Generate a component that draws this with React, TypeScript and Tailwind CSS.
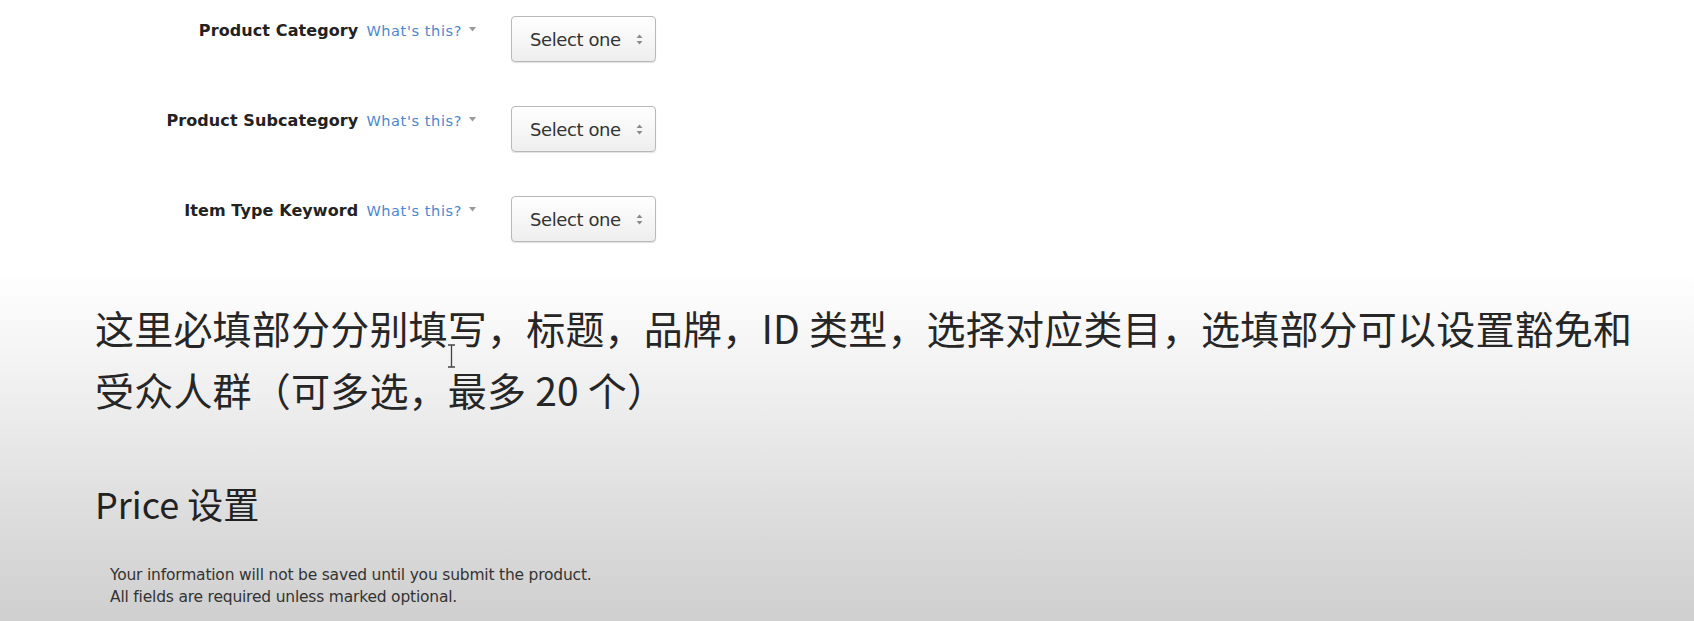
import React from 'react';

const fields = ['Product Category', 'Product Subcategory', 'Item Type Keyword'];

function UpDownArrows() {
  return (
    <svg width="7" height="11" viewBox="0 0 7 11" className="text-[#8a8a8a]">
      <path d="M3.5 0.5 L6.5 4 L0.5 4 Z" fill="currentColor" />
      <path d="M3.5 10.5 L6.5 7 L0.5 7 Z" fill="currentColor" />
    </svg>
  );
}

function FieldRow({ label }: { label: string }) {
  return (
    <div className="flex items-start">
      <div className="w-[476px] mt-[4px] flex items-center justify-end gap-[8px]">
        <span className="text-[16px] leading-[22px] font-bold text-[#222] tracking-[0.1px]">{label}</span>
        <span className="flex items-center gap-[7px] text-[14.5px] leading-[22px] text-[#4a87cf] tracking-[0.6px]">
          What's this?
          <svg width="7" height="5" viewBox="0 0 7 5" className="mb-[3px]">
            <path d="M0 0 L7 0 L3.5 4.5 Z" fill="#9a9a9a" />
          </svg>
        </span>
      </div>
      <button className="ml-[35px] w-[145px] h-[46px] flex items-center justify-between pl-[18px] pr-[12px] rounded-[4px] border border-[#b9b9b9] bg-[linear-gradient(to_bottom,#ffffff,#eeeeee)] shadow-[0_1px_1px_rgba(0,0,0,0.12)] text-[18px] text-[#333] tracking-[-0.4px]">
        <span>Select one</span>
        <UpDownArrows />
      </button>
    </div>
  );
}

export default function App() {
  return (
    <div
      className="relative w-full min-h-[621px] overflow-hidden bg-[linear-gradient(to_bottom,#ffffff_0px,#ffffff_272px,#eeeeee_400px,#dcdcdc_520px,#cfcfcf_621px)]"
      style={{ fontFamily: '"DejaVu Sans", "Noto Sans CJK SC", sans-serif' }}
    >
      {/* form rows */}
      <div className="pt-[16px] flex flex-col gap-[44px]">
        {fields.map((f) => (
          <FieldRow key={f} label={f} />
        ))}
      </div>

      {/* explanation */}
      <div
        className="pl-[95px] mt-[54px] text-[39px] leading-[62px] text-[#262626] tracking-[0.2px]"
        style={{ fontFamily: '"Noto Sans CJK SC", sans-serif' }}
      >
        这里必填部分分别填写，标题，品牌，ID 类型，选择对应类目，选填部分可以设置豁免和
        <br />
        受众人群（可多选，最多 20 个）
      </div>

      <div
        className="pl-[95px] mt-[58px] text-[36px] leading-[50px] text-[#222]"
        style={{ fontFamily: '"Noto Sans CJK SC", sans-serif' }}
      >
        Price 设置
      </div>

      <div className="pl-[110px] mt-[36px] text-[15.5px] leading-[22px] text-[#333] tracking-[-0.2px]">
        <p>Your information will not be saved until you submit the product.</p>
        <p>All fields are required unless marked optional.</p>
      </div>

      {/* mouse text cursor */}
      <svg className="absolute left-[447px] top-[344px]" width="9" height="24" viewBox="0 0 9 24">
        <path d="M1 1 H8 M4.5 1 V23 M1 23 H8" stroke="#444" strokeWidth="1.3" fill="none" />
      </svg>
    </div>
  );
}
